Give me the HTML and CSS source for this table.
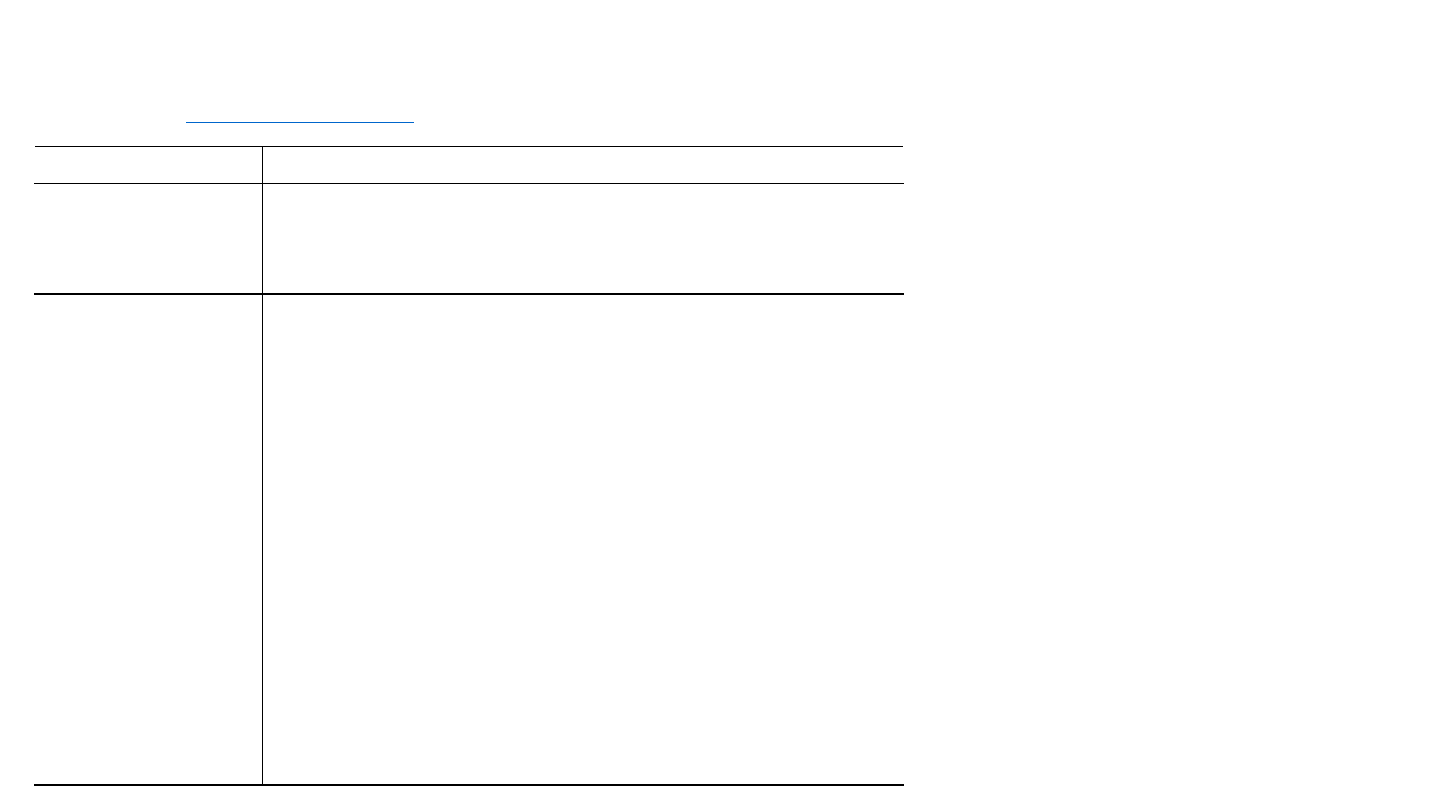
FILE: index.html
```html
<!DOCTYPE html>
<html lang="en">
<head>
  <meta charset="UTF-8" />
  <meta name="viewport" content="width=device-width, initial-scale=1.0"/>
  <title>Document</title>
  <link rel="stylesheet" href="styles.css">
</head>
<body>
  <div class="page">
    <div class="intro">
      <a href="#" class="doc-link" aria-label="link"></a>
    </div>

    <div class="sheet">
      <div class="sheet-row sheet-head">
        <div class="cell cell-key"></div>
        <div class="cell"></div>
      </div>
      <div class="sheet-row sheet-short">
        <div class="cell cell-key"></div>
        <div class="cell"></div>
      </div>
      <div class="sheet-row sheet-tall">
        <div class="cell cell-key"></div>
        <div class="cell"></div>
      </div>
    </div>
  </div>
</body>
</html>
```

FILE: styles.css
```css
:root {
  --line-color: #000;
  --link-color: #0066cc;
}

* {
  box-sizing: border-box;
  margin: 0;
  padding: 0;
}

body {
  font-family: 'Liberation Sans', Arial, sans-serif;
  background: #fff;
  color: #fff;
}

.page {
  padding-left: 35px;
}

.intro {
  height: 146px;
  padding-left: 151px;
  padding-top: 103px;
}

.doc-link {
  display: block;
  width: 228px;
  height: 20px;
  border-bottom: 1px solid var(--link-color);
}

.sheet {
  width: 868px;
  border-top: 1px solid var(--line-color);
}

.sheet-row {
  display: grid;
  grid-template-columns: 228px 1fr;
}

.cell-key {
  border-right: 1px solid var(--line-color);
}

/* rules under the rows run 1px wider than the top rule */
.sheet-head,
.sheet-short,
.sheet-tall {
  margin: 0 -1px;
  padding: 0 1px;
}

.sheet-head {
  height: 37px;
  border-bottom: 1px solid var(--line-color);
}

.sheet-short {
  height: 111px;
  border-bottom: 2px solid var(--line-color);
}

.sheet-tall {
  height: 491px;
  border-bottom: 2px solid var(--line-color);
}
```
